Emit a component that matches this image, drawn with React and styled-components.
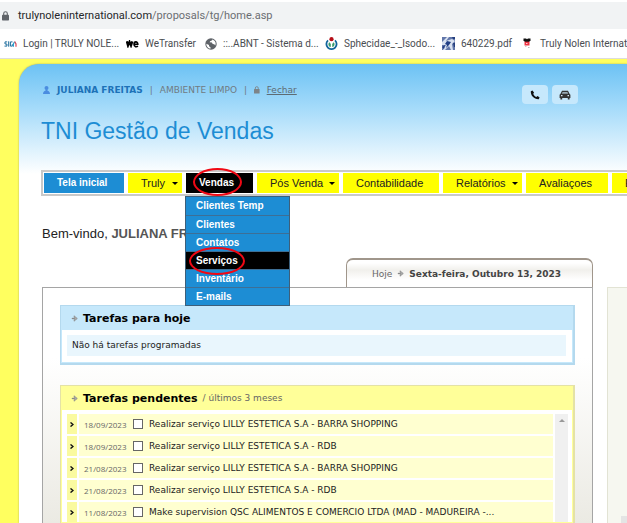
import React from "react";
import styled, { createGlobalStyle, css } from "styled-components";

const GlobalStyle = createGlobalStyle`
  *, *::before, *::after { box-sizing: border-box; }
  html, body { margin: 0; background: #ffff5f; }
  body { font-family: "DejaVu Sans", Verdana, sans-serif; color: #222; }
  button, input { font: inherit; margin: 0; padding: 0; }
  h1, h2, p, ul { margin: 0; padding: 0; }
  ul { list-style: none; }
`;

const Page = styled.div`
  height: 100vh;
  display: flex;
  flex-direction: column;
  overflow: hidden;
`;

const AddressBar = styled.div`
  flex: none;
  display: flex;
  align-items: center;
  gap: 9px;
  height: 29px;
  padding-left: 2px;
  border-top: 2px solid #fff;
  background: #f1f3f4;
  font: 11px Roboto, "Segoe UI", sans-serif;
  color: #6b6e72;
`;

const Address = styled.p`
  white-space: nowrap;
  b { font-weight: 400; color: #25272a; }
`;

const Bookmarks = styled.nav`
  flex: none;
  display: flex;
  align-items: center;
  height: 30px;
  padding-left: 4px;
  background: #fff;
  border-bottom: 1px solid #dcdcdc;
  font: 10px Roboto, "Segoe UI", sans-serif;
  white-space: nowrap;
`;

const Bookmark = styled.a`
  flex: none;
  display: flex;
  align-items: center;
  gap: ${(p) => p.$gap || 6}px;
  width: ${(p) => p.$width}px;
  color: #4a4d51;
  text-decoration: none;
  svg { flex: none; }
`;

const Site = styled.main`
  flex: 1;
  display: flex;
  flex-direction: column;
  margin: 5px 0 0 19px;
  padding-left: 22px;
  border-top-left-radius: 20px;
  background: #fff linear-gradient(#6cc2f4, #a5dbfa 44px, #fff 110px) no-repeat;
  box-shadow: 0 0 2px #a8a860;
`;

const TopRow = styled.header`
  display: flex;
  align-items: center;
  height: 19px;
  margin-top: 21px;
  font-size: 9px;
  color: #707b82;
`;

const UserInfo = styled.div`
  display: flex;
  align-items: center;
  gap: 7px;
  width: 481px;
  padding: 0 0 9px 2px;
  b { color: #1d72b8; }
  a { color: #5d6b74; }
`;

const SquareButton = styled.button`
  display: grid;
  place-items: center;
  width: 26px;
  height: 19px;
  margin-right: 4px;
  border: 0;
  border-radius: 4px;
  background: #c6e8fc;
  color: #111;
`;

const Title = styled.h1`
  margin-top: 13px;
  font: 23px/28px "Liberation Sans", Arial, sans-serif;
  color: #1d8dd4;
`;

const MenuBar = styled.ul`
  display: flex;
  gap: 4px;
  height: 26px;
  margin-top: 25px;
  padding: 1px;
  border: 2px solid #c9c9c9;
  border-right: 0;
  font: 11px/20px "Liberation Sans", Arial, sans-serif;
`;

const MenuItem = styled.li`
  position: relative;
  flex: none;
  width: ${(p) => p.$width}px;
`;

const menuTone = {
  home: css`background: #1d8dd4; color: #fff; font-size: 10px; font-weight: 700;`,
  open: css`background: #000; color: #fff; font-size: 10px; font-weight: 700;`,
  plain: css`background: #ff0; color: #222;`,
};

const MenuButton = styled.button`
  display: flex;
  align-items: center;
  justify-content: space-between;
  width: 100%;
  height: 20px;
  padding: 0 4px 0 13px;
  border: 0;
  white-space: nowrap;
  ${(p) => menuTone[p.$tone]}
`;

const Caret = styled.span`
  border: 3px solid transparent;
  border-top-color: #000;
  border-bottom: 0;
`;

const Dropdown = styled.ul`
  position: absolute;
  z-index: 2;
  top: 23px;
  left: -1px;
  width: 105px;
  border: 1px solid #3d5f7a;
  background: #1d8dd4;
`;

const DropdownItem = styled.li`
  position: relative;
  height: 18px;
  background: ${(p) => (p.$active ? "#000" : "#1d8dd4")};
  & + & { border-top: 1px solid #3d6f96; }
  a {
    display: block;
    padding-left: 10px;
    font-weight: 700;
    font-size: 10px;
    line-height: 18px;
    color: #fff;
    text-decoration: none;
  }
`;

const Ring = styled.span`
  position: absolute;
  z-index: 3;
  top: ${(p) => p.$top}px;
  left: ${(p) => p.$left}px;
  width: ${(p) => p.$width}px;
  height: 28px;
  border: 2px solid #f00814;
  border-radius: 50%;
  pointer-events: none;
`;

const Welcome = styled.p`
  margin-top: 29px;
  padding-left: 1px;
  font: 13px/18px "Liberation Sans", Arial, sans-serif;
  b { color: #555; }
`;

const Columns = styled.div`
  flex: 1;
  display: flex;
  gap: 14px;
  min-height: 0;
  margin-top: 15px;
  padding-left: 1px;
`;

const Main = styled.section`
  flex: 1;
  min-width: 0;
  display: flex;
  flex-direction: column;
`;

const DateTab = styled.div`
  align-self: flex-end;
  display: flex;
  align-items: center;
  gap: 5px;
  width: 247px;
  height: 29px;
  padding-left: 25px;
  border: 1px solid #a0968b;
  border-top-width: 2px;
  border-bottom: 0;
  border-radius: 7px 7px 0 0;
  background: linear-gradient(#fff 3px, #f1f0ec 10px, #fff 20px);
  font-size: 9px;
  color: #666;
  white-space: nowrap;
  b { color: #444; }
`;

const Panel = styled.div`
  flex: 1;
  min-height: 0;
  display: flex;
  flex-direction: column;
  gap: 20px;
  padding: 17px 17px 0;
  border: 1px solid #a5a5a5;
  border-bottom: 0;
  background: linear-gradient(#fff 70px, #ebeae3);
`;

const SidePanel = styled.aside`
  flex: none;
  display: flex;
  align-items: flex-end;
  justify-content: flex-end;
  width: 20px;
  margin-top: 29px;
  border: 1px solid #e2e3d4;
  border-width: 1px 0 0 1px;
  background: #f6f7f0;
  &::after { content: ""; width: 6px; height: 7px; background: #e4e4e4; }
`;

const tones = {
  blue: { edge: "#b4d9ee", head: "#c6e8fb", row: "#e9f6fd" },
  yellow: { edge: "#e4e2a6", head: "#ffff99", row: "#ffffd0" },
};

const TaskBox = styled.section`
  display: flex;
  flex-direction: column;
  flex: ${(p) => (p.$grow ? "1 0 auto" : "none")};
  min-width: 0;
  border: 1px solid ${(p) => tones[p.$tone].edge};
  border-bottom-width: ${(p) => (p.$grow ? 0 : 2)}px;
  border-right-width: 2px;
  background: #fff;
`;

const TaskHead = styled.header`
  display: flex;
  align-items: center;
  gap: 5px;
  height: 24px;
  padding-left: 10px;
  background: ${(p) => tones[p.$tone].head};
  h2 { font-size: 11px; color: #000; }
  small { font-size: 9px; color: #666; }
`;

const TaskBody = styled.div`
  flex: 1;
  display: flex;
  gap: 2px;
  padding: ${(p) => (p.$tone === "blue" ? "5px 6px 6px 5px" : "4px 4px 0 5px")};
  border: 1px solid ${(p) => tones[p.$tone].head};
  border-top: 0;
`;

const EmptyNote = styled.p`
  flex: 1;
  padding-left: 5px;
  background: ${tones.blue.row};
  font-size: 9px;
  line-height: 21px;
`;

const TaskList = styled.ul`
  flex: 1;
  min-width: 0;
  display: grid;
  align-content: start;
  gap: 2px;
`;

const TaskRow = styled.li`
  display: grid;
  grid-template-columns: 10px 1fr;
  gap: 2px;
  height: 20px;
`;

const Marker = styled.span`
  display: grid;
  place-items: center;
  background: #fafaa0;
`;

const TaskLabel = styled.label`
  display: flex;
  align-items: center;
  gap: 6px;
  padding-left: 5px;
  background: ${tones.yellow.row};
  font-size: 9px;
  white-space: nowrap;
  color: #222;
  time { width: 43px; font: 8px "Open Sans", Tahoma, sans-serif; color: #666; }
`;

const Check = styled.input`
  appearance: none;
  width: 10px;
  height: 10px;
  border: 1px solid #666;
  background: #fff;
  &:checked { background: #1d8dd4; }
`;

const ScrollTrack = styled.div`
  display: flex;
  justify-content: center;
  width: 13px;
  padding-top: 5px;
  background: #f0f0f0;
  &::before {
    content: "";
    height: 3px;
    border: 3px solid transparent;
    border-top: 0;
    border-bottom-color: #999;
  }
`;

const Lock = ({ size = 10, color }) => (
  <svg width={size * 0.7} height={size} viewBox="0 0 7 10" fill="none" aria-hidden="true">
    <path d="M1.7 4.5V2.6a1.8 1.8 0 0 1 3.6 0v1.9" stroke={color} strokeWidth="1.1" />
    <rect y="3.7" width="7" height="5.8" rx=".7" fill={color} />
  </svg>
);

const UserIcon = () => (
  <svg width="7" height="8" viewBox="0 0 7 8" fill="#4b8de0" aria-hidden="true">
    <circle cx="3.5" cy="2" r="2" />
    <path d="M2.5 3.5h2v1.3c1.5.3 2.3 1 2.5 3.2H0c.2-2.2 1-2.9 2.5-3.2z" />
  </svg>
);

const SmallArrow = () => (
  <svg width="7" height="7" viewBox="0 0 7 7" aria-hidden="true">
    <path d="M.8 3.500h3" stroke="#888" strokeWidth="1.300" />
    <path d="M3 .8 6.300 3.500 3 6.200l.5-2.700z" fill="#aaa" stroke="#888" strokeWidth=".7" />
  </svg>
);

const Chevron = () => (
  <svg width="4" height="5" viewBox="0 0 4 5" fill="none" stroke="#111" aria-hidden="true">
    <path d="M.5.4 3 2.5.5 4.6" strokeWidth="1.3" />
  </svg>
);

const SigaLogo = () => (
  <svg width="13" height="8" viewBox="0 0 13 8" fill="none" aria-hidden="true">
    <path d="M3.200 1.900H1V4h1.900v2.100H.5M4.700 1.300v5.400M8.500 1.900H6.400v4.200h1.900V4.200" stroke="#1d6c9c" />
    <path d="M9.400 6.800V4l1.200-2.300" stroke="#29a2cf" strokeWidth="1.200" />
    <path d="m10.700 1.500 1.300 2.500v2.800" stroke="#d8495a" strokeWidth="1.200" />
  </svg>
);

const WeLogo = () => (
  <svg width="13" height="8" viewBox="0 0 13 8" fill="none" stroke="#000" aria-hidden="true">
    <path d="M.8 1.3 2 5.500l1.500-3.700L5 5.500l1.300-4.200" strokeWidth="2.200" />
    <path d="M8 4.200h3.800C11.800 1 8 1.200 8 4.200s2.600 2.800 4 1.900" strokeWidth="1.600" />
  </svg>
);

const Globe = () => (
  <svg width="12" height="12" viewBox="0 0 12 12" aria-hidden="true">
    <circle cx="6" cy="6" r="5.700" fill="#5f6368" />
    <path d="M1.300 5.700 4 7v1.200l1.500 1v1.500C2.800 10.400 1.200 8.300 1.300 5.700zM7.200 1.400c.2 1-1 1.400-1.900 1.600L4.600 4.300l2.300.2.800 1.500 1.600.3.900 1.200c1.200-2.400.2-5.300-3-6.100z" fill="#fff" />
  </svg>
);

const Commons = () => (
  <svg width="13" height="13" viewBox="0 0 13 13" fill="none" aria-hidden="true">
    <path d="M3 3.300A5.100 5.100 0 1 0 10 3.300" stroke="#11659c" strokeWidth="1.800" />
    <path d="M4.400 5.200c-1.700 1.500-1.100 4.500 1.400 4.800V7zm4.200 0c1.700 1.500 1.100 4.500-1.400 4.800V7z" fill="#3a9b6d" />
    <circle cx="6.500" cy="2.200" r="2.100" fill="#b50d16" />
  </svg>
);

const PdfSite = () => (
  <svg width="13" height="13" viewBox="0 0 13 13" aria-hidden="true">
    <rect width="13" height="13" fill="#6277aa" />
    <path d="m0 5 5-5h2L4 4l6-2 3 2-3 3 1 6H9L7 9l-4 4H1l3-5H0z" fill="#d8e1f0" />
    <path d="m5 4 4 1-2 3-3 3 1-3-2-1zM0 10l3-2-1 4z" fill="#223f85" />
    <path d="M10 0h3v2h-2zm1 6h2v4h-1z" fill="#243e7d" />
  </svg>
);

const Mouse = () => (
  <svg width="8" height="11" viewBox="0 0 8 11" aria-hidden="true">
    <path d="M.5.500h2.500l1 .8L5 .5h2.500V3H6.500v1h-5V3h-1z" fill="#111" />
    <path d="M1.500 3.700h5v3.800h-5z" fill="#ed3342" />
    <path d="M3 5h1.500v.8H3z" fill="#fff" />
    <path d="M2 8.300h1.500v.8H2zm3 .8h1.500v.8H5z" fill="#bbb" />
  </svg>
);

const Phone = () => (
  <svg width="10" height="10" viewBox="0 0 10 10" fill="currentColor" aria-hidden="true">
    <path d="M2.500.4.8 1.300C.5 5.600 4.200 9.500 8.700 9.300l.9-1.700-2-1.500-1.300.9C4.900 6.400 3.800 5.200 3.200 3.800l.9-1z" />
  </svg>
);

const Car = () => (
  <svg width="12" height="10" viewBox="0 0 12 10" fill="#333" aria-hidden="true">
    <path d="M3 .8h6l1.500 3 .9 1V8h-.8v1.500H8.800V8H3.200v1.500H1.400V8H.6V4.800l.9-1z" />
    <path d="M3.600 1.900h4.800l.8 1.900H2.800z" fill="#9aabb5" />
    <path d="M2 5h1.500v1.200H2zm6.500 0H10v1.200H8.500z" fill="#d8eaf5" />
  </svg>
);

const bookmarks = [
  { label: "Login | TRULY NOLE...", icon: <SigaLogo />, width: 122 },
  { label: "WeTransfer", icon: <WeLogo />, width: 79 },
  { label: "::..ABNT - Sistema d...", icon: <Globe />, width: 120 },
  { label: "Sphecidae_-_Isodo...", icon: <Commons />, width: 117 },
  { label: "640229.pdf", icon: <PdfSite />, width: 81 },
  { label: "Truly Nolen Internat.", icon: <Mouse />, width: 105, gap: 9 },
];

const salesLinks = ["Clientes Temp", "Clientes", "Contatos", "Serviços", "Inventário", "E-mails"];

const menu = [
  { label: "Tela inicial", width: 80, tone: "home" },
  { label: "Truly", width: 54, caret: true },
  { label: "Vendas", width: 67, tone: "open", links: salesLinks },
  { label: "Pós Venda", width: 82, caret: true },
  { label: "Contabilidade", width: 96 },
  { label: "Relatórios", width: 79, caret: true },
  { label: "Avaliaçoes", width: 82 },
  { label: "E", width: 60 },
];

const tasks = [
  ["18/09/2023", "Realizar serviço LILLY ESTETICA S.A - BARRA SHOPPING"],
  ["18/09/2023", "Realizar serviço LILLY ESTETICA S.A - RDB"],
  ["21/08/2023", "Realizar serviço LILLY ESTETICA S.A - BARRA SHOPPING"],
  ["21/08/2023", "Realizar serviço LILLY ESTETICA S.A - RDB"],
  ["11/08/2023", "Make supervision QSC ALIMENTOS E COMERCIO LTDA (MAD - MADUREIRA -..."],
];

export default function App() {
  return (
    <Page>
      <GlobalStyle />
      <AddressBar>
        <Lock size={10} color="#5f6368" />
        <Address><b>trulynoleninternational.com</b>/proposals/tg/home.asp</Address>
      </AddressBar>
      <Bookmarks>
        {bookmarks.map((b) => (
          <Bookmark key={b.label} href="#" $width={b.width} $gap={b.gap}>
            {b.icon}
            {b.label}
          </Bookmark>
        ))}
      </Bookmarks>
      <Site>
        <TopRow>
          <UserInfo>
            <UserIcon />
            <b>JULIANA FREITAS</b>
            <span>|</span>
            <span>AMBIENTE LIMPO</span>
            <span>|</span>
            <Lock size={8} color="#7d8488" />
            <a href="#">Fechar</a>
          </UserInfo>
          <SquareButton aria-label="Telefone"><Phone /></SquareButton>
          <SquareButton aria-label="Veículo"><Car /></SquareButton>
        </TopRow>
        <Title>TNI Gestão de Vendas</Title>
        <MenuBar>
          {menu.map((m) => (
            <MenuItem key={m.label} $width={m.width}>
              <MenuButton $tone={m.tone || "plain"}>
                {m.label}
                {m.caret && <Caret />}
              </MenuButton>
              {m.links && (
                <>
                  <Ring $top={-5} $left={7} $width={49} />
                  <Dropdown>
                    {m.links.map((l) => (
                      <DropdownItem key={l} $active={l === "Serviços"}>
                        <a href="#">{l}</a>
                        {l === "Serviços" && <Ring $top={-5} $left={3} $width={56} />}
                      </DropdownItem>
                    ))}
                  </Dropdown>
                </>
              )}
            </MenuItem>
          ))}
        </MenuBar>
        <Welcome>Bem-vindo, <b>JULIANA FREITAS</b></Welcome>
        <Columns>
          <Main>
            <DateTab>
              Hoje <SmallArrow /> <b>Sexta-feira, Outubro 13, 2023</b>
            </DateTab>
            <Panel>
              <TaskBox $tone="blue">
                <TaskHead $tone="blue">
                  <SmallArrow />
                  <h2>Tarefas para hoje</h2>
                </TaskHead>
                <TaskBody $tone="blue">
                  <EmptyNote>Não há tarefas programadas</EmptyNote>
                </TaskBody>
              </TaskBox>
              <TaskBox $tone="yellow" $grow>
                <TaskHead $tone="yellow">
                  <SmallArrow />
                  <h2>Tarefas pendentes</h2>
                  <small>/ últimos 3 meses</small>
                </TaskHead>
                <TaskBody $tone="yellow">
                  <TaskList>
                    {tasks.map(([date, text], i) => (
                      <TaskRow key={i}>
                        <Marker><Chevron /></Marker>
                        <TaskLabel>
                          <time>{date}</time>
                          <Check type="checkbox" />
                          {text}
                        </TaskLabel>
                      </TaskRow>
                    ))}
                  </TaskList>
                  <ScrollTrack />
                </TaskBody>
              </TaskBox>
            </Panel>
          </Main>
          <SidePanel />
        </Columns>
      </Site>
    </Page>
  );
}
